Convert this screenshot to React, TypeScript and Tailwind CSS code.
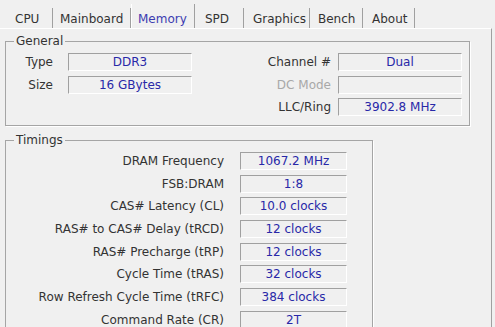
import React from 'react';

const tabs = [
  { label: 'CPU', w: 'w-[45px]', pl: 'pl-[7px]' },
  { label: 'Mainboard', w: 'w-[78px]', pl: 'pl-[7px]' },
  { label: 'Memory', w: 'w-[64px]', pl: 'pl-[6px]', active: true },
  { label: 'SPD', w: 'w-[49px]', pl: 'pl-[10px]' },
  { label: 'Graphics', w: 'w-[66px]', pl: 'pl-[9px]' },
  { label: 'Bench', w: 'w-[53px]', pl: 'pl-[8px]' },
  { label: 'About', w: 'w-[52px]', pl: 'pl-[9px]' }
];

const timings = [
  ['DRAM Frequency', '1067.2 MHz'],
  ['FSB:DRAM', '1:8'],
  ['CAS# Latency (CL)', '10.0 clocks'],
  ['RAS# to CAS# Delay (tRCD)', '12 clocks'],
  ['RAS# Precharge (tRP)', '12 clocks'],
  ['Cycle Time (tRAS)', '32 clocks'],
  ['Row Refresh Cycle Time (tRFC)', '384 clocks'],
  ['Command Rate (CR)', '2T']
];

const Field = ({ value, width }: { value?: string; width: string }) => (
  <div
    className={`${width} flex h-[18px] items-center justify-center border-t border-l border-[#a0a0a0] border-r border-b border-r-white border-b-white text-[#2828a8]`}
  >
    {value}
  </div>
);

export default function App() {
  return (
    <div className="h-[327px] w-[495px] overflow-hidden bg-[#f0f0f0] font-['DejaVu_Sans',sans-serif] text-[12px] leading-[14px] text-[#333]">
      {/* tab strip */}
      <div className="flex h-[28px] items-end pl-[8px]">
        {tabs.map(tab =>
          tab.active ? (
            <div
              key={tab.label}
              className={`${tab.w} ${tab.pl} flex h-[24px] items-center border-l border-r border-l-white border-r-[#a0a0a0] pt-[5px] text-[#3c3cb0]`}
            >
              {tab.label}
            </div>
          ) : (
            <div
              key={tab.label}
              className={`${tab.w} ${tab.pl} flex h-[20px] items-center border-r border-[#a0a0a0] pt-[1px] text-[#333]`}
            >
              {tab.label}
            </div>
          )
        )}
      </div>

      {/* panel */}
      <div className="h-[299px] w-[492px] border-t border-r border-t-white border-r-[#a0a0a0] pl-[5px] pt-[5px]">
        <fieldset className="w-[465px] border border-[#a5a5a5] pb-[9px] shadow-[1px_1px_0_#fff]">
          <legend className="ml-[8px] px-[2px]">General</legend>
          <div className="flex flex-col gap-[4.5px] pt-[5px]">
            <div className="flex items-center">
              <span className="w-[47px] text-right">Type</span>
              <div className="ml-[15px]"><Field value="DDR3" width="w-[124px]" /></div>
              <span className="w-[139px] text-right">Channel #</span>
              <div className="ml-[7px]"><Field value="Dual" width="w-[124px]" /></div>
            </div>
            <div className="flex items-center">
              <span className="w-[47px] text-right">Size</span>
              <div className="ml-[15px]"><Field value="16 GBytes" width="w-[124px]" /></div>
              <span className="w-[139px] text-right text-[#a8a8a8]">DC Mode</span>
              <div className="ml-[7px]"><Field width="w-[124px]" /></div>
            </div>
            <div className="flex items-center">
              <span className="w-[47px]" />
              <div className="ml-[15px] w-[124px]" />
              <span className="w-[139px] text-right">LLC/Ring</span>
              <div className="ml-[7px]"><Field value="3902.8 MHz" width="w-[124px]" /></div>
            </div>
          </div>
        </fieldset>

        <fieldset className="mt-[7px] w-[368px] border border-[#a5a5a5] pb-[9px] shadow-[1px_1px_0_#fff]">
          <legend className="ml-[8px] px-[2px]">Timings</legend>
          <div className="flex flex-col gap-[4.7px] pt-[5px]">
            {timings.map(([label, value]) => (
              <div key={label} className="flex items-center">
                <span className="w-[218px] text-right">{label}</span>
                <div className="ml-[16px]"><Field value={value} width="w-[107px]" /></div>
              </div>
            ))}
          </div>
        </fieldset>
      </div>
    </div>
  );
}
